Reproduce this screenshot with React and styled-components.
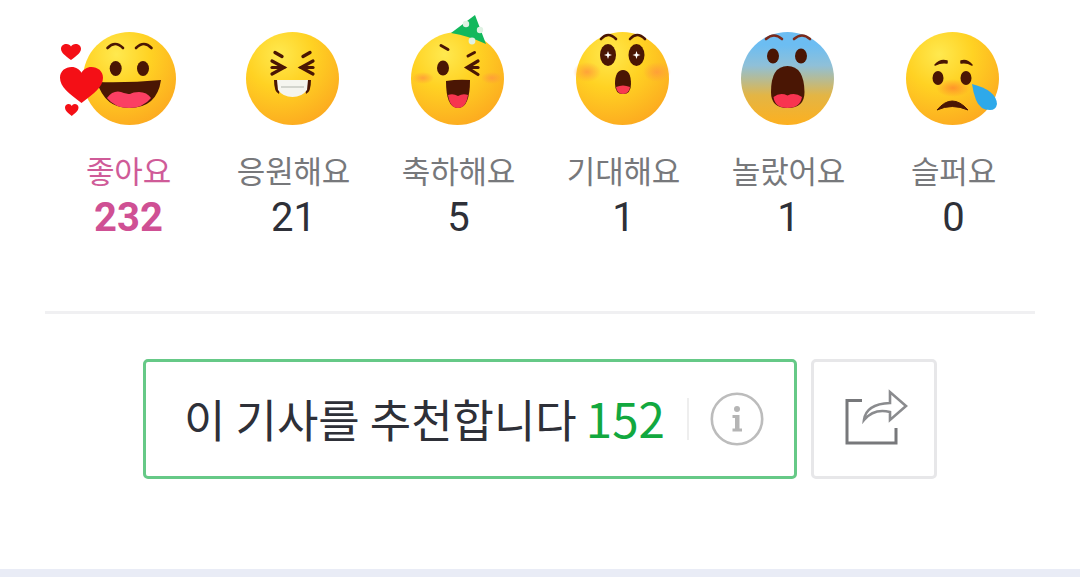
import React from 'react';
import styled, { createGlobalStyle } from 'styled-components';

const GlobalStyle = createGlobalStyle`
  html, body { margin: 0; padding: 0; background: #fff; }
  #root { height: 577px; overflow: hidden; }
`;

const Page = styled.div`
  height: 577px;
  display: flex;
  flex-direction: column;
  font-family: "Noto Sans CJK KR", "Noto Sans", sans-serif;
`;

const ReactionRow = styled.ul`
  list-style: none;
  margin: 0;
  padding: 32px 45px 0;
  display: grid;
  grid-template-columns: repeat(6, 165px);
`;

const Reaction = styled.li`
  display: flex;
  flex-direction: column;
  align-items: center;
`;

const FaceSvg = styled.svg`
  display: block;
  width: 93px;
  height: 93px;
  overflow: visible;
  margin-left: ${p => (p.$shift ? '4px' : '0')};
`;

const Label = styled.span`
  margin-top: 23px;
  padding-left: 2px;
  height: 44px;
  line-height: 44px;
  font-size: 31px;
  letter-spacing: -0.2px;
  color: ${p => (p.$active ? '#cf5b98' : '#77787b')};
`;

const Count = styled.strong`
  margin-top: 2px;
  padding-left: 2px;
  height: 48px;
  line-height: 48px;
  font-family: Roboto, sans-serif;
  font-size: 40px;
  font-weight: ${p => (p.$active ? 700 : 400)};
  color: ${p => (p.$active ? '#cf5094' : '#2e3038')};
`;

const Divider = styled.hr`
  margin: 69px 45px 0;
  border: 0;
  height: 3px;
  background: #f0f0f2;
`;

const ButtonRow = styled.div`
  margin-top: 45px;
  display: flex;
  justify-content: center;
  gap: 14px;
`;

const RecommendButton = styled.button`
  box-sizing: border-box;
  width: 654px;
  height: 120px;
  padding: 0 0 0 38px;
  display: flex;
  align-items: center;
  background: #fff;
  border: 3px solid #66c987;
  border-radius: 5px;
  font-family: inherit;
  font-size: 45px;
  color: #2e3038;
  white-space: nowrap;
`;

const RecommendText = styled.span`
  margin-bottom: 4px;
`;

const RecommendCount = styled.span`
  margin-left: 9px;
  font-size: 47.5px;
  color: #12a83f;
`;

const Separator = styled.span`
  flex-shrink: 0;
  width: 2px;
  height: 42px;
  margin: 0 21px 0 22px;
  background: #eeeeee;
`;

const ShareButton = styled.button`
  box-sizing: border-box;
  width: 126px;
  height: 120px;
  padding: 0 0 4px 6px;
  display: flex;
  align-items: center;
  justify-content: center;
  background: #fff;
  border: 3px solid #e7e7e9;
  border-radius: 5px;
`;

const BottomStrip = styled.div`
  margin-top: auto;
  height: 8px;
  background: #e9ecf6;
`;

const IconSvg = styled.svg`
  display: block;
  flex-shrink: 0;
`;

const BROWN = '#4a1604';

// yellow ball shared by the faces
const Ball = ({ id }) => (
  <>
    <defs>
      <radialGradient id={id} cx="0.36" cy="0.24" r="0.85">
        <stop offset="0" stopColor="#ffe94f" />
        <stop offset="0.42" stopColor="#ffd223" />
        <stop offset="1" stopColor="#fca61f" />
      </radialGradient>
    </defs>
    <circle cx="46.5" cy="46.5" r="46.5" fill={`url(#${id})`} />
  </>
);

const Blush = ({ id, spots, color = '#ff9a3c', rx = 11, ry = 6 }) => (
  <>
    <defs>
      <radialGradient id={id}>
        <stop offset="0" stopColor={color} stopOpacity="0.85" />
        <stop offset="1" stopColor={color} stopOpacity="0" />
      </radialGradient>
    </defs>
    {spots.map(([cx, cy]) => (
      <ellipse key={cx} cx={cx} cy={cy} rx={rx} ry={ry} fill={`url(#${id})`} />
    ))}
  </>
);

const Heart = ({ x, y, w, h }) => (
  <path
    transform={`translate(${x} ${y}) scale(${w / 24} ${h / 22})`}
    fill="#f40f16"
    d="M12 22C5 16 0 12 0 6.5 0 2.5 3 0 6.5 0 9 0 11 1.5 12 3.5 13 1.5 15 0 17.5 0 21 0 24 2.5 24 6.5 24 12 19 16 12 22Z"
  />
);

const Brow = ({ d, width = 2.6, color = BROWN }) => (
  <path d={d} fill="none" stroke={color} strokeWidth={width} strokeLinecap="round" />
);

const Likes = () => (
  <FaceSvg viewBox="0 0 93 93" $shift>
    <Ball id="ballLike" />
    <Brow d="M24.5 16Q32 8 40 16" />
    <Brow d="M53 16Q61 8 68.5 16" />
    <ellipse cx="32.7" cy="36.5" rx="6" ry="7.5" fill={BROWN} />
    <ellipse cx="60" cy="36.5" rx="6" ry="7.5" fill={BROWN} />
    <path d="M14 50Q46 51 78 48Q74 76 46 76Q22 76 14 50Z" fill={BROWN} />
    <path d="M24 66Q30 58 38 60Q44 62 47 62Q50 60 56 60Q64 60 68 66Q60 76 46 76Q32 76 24 66Z" fill="#fb3f63" />
    <Heart x={-23} y={35} w={43} h={36} />
    <Heart x={-22} y={12} w={20} h={16} />
    <Heart x={-18} y={72} w={13.5} h={12} />
  </FaceSvg>
);

const Cheer = () => (
  <FaceSvg viewBox="0 0 93 93">
    <Ball id="ballCheer" />
    <Brow d="M29 20.5L36 24.5" width="3.4" />
    <Brow d="M64 20.5L57 24.5" width="3.4" />
    <Brow d="M26 29L38 35.5L26 42" width="3.2" />
    <Brow d="M26 35.5H38" width="3.2" />
    <Brow d="M67 29L55 35.5L67 42" width="3.2" />
    <Brow d="M67 35.5H55" width="3.2" />
    <path d="M28 48Q28 60 33 62L35 48Z M65 48Q65 60 60 62L58 48Z" fill={BROWN} />
    <path d="M31 48H62L61 58Q56 65 46.5 65Q37 65 32 58Z" fill="#f5f5ef" />
    <path d="M35 55H58" stroke="#c5c8c0" strokeWidth="1.4" />
  </FaceSvg>
);

const Congrats = () => (
  <FaceSvg viewBox="0 0 93 93">
    <Ball id="ballParty" />
    <Blush id="blushParty" spots={[[12, 46], [81, 46]]} />
    <path d="M64 -17L40 1Q58 4 75 12Z" fill="#12b85c" />
    <circle cx="55" cy="-8" r="3.2" fill="#dff2e3" />
    <circle cx="69" cy="-2" r="3.2" fill="#dff2e3" />
    <circle cx="61" cy="9" r="3.4" fill="#dff2e3" />
    <Brow d="M30 13.5L37 17.5" width="3" />
    <Brow d="M57 24L63.5 20.5" width="3" />
    <ellipse cx="32" cy="36" rx="6" ry="7.5" fill={BROWN} />
    <Brow d="M67 29L56 35.5L67 42.5" width="3.2" />
    <Brow d="M58 35.5H67" width="3.2" />
    <path d="M35 49Q47 47 59 48Q59 76 47 76Q35 76 35 49Z" fill={BROWN} />
    <path d="M37 63Q42 61 47 64Q52 61 57 63Q55 76 47 76Q39 76 37 63Z" fill="#f7354f" />
  </FaceSvg>
);

const Sparkle = ({ x, y }) => (
  <path
    d={`M${x} ${y - 4}L${x + 1} ${y - 1}L${x + 4} ${y}L${x + 1} ${y + 1}L${x} ${y + 4}L${x - 1} ${y + 1}L${x - 4} ${y}L${x - 1} ${y - 1}Z`}
    fill="#fff"
  />
);

const Expect = () => (
  <FaceSvg viewBox="0 0 93 93">
    <Ball id="ballExpect" />
    <Blush id="blushExpect" spots={[[11, 40], [81, 40]]} rx={14} ry={10} />
    <Brow d="M25 7Q32 -1 40 7" />
    <Brow d="M54 7Q61 -1 69 7" />
    <ellipse cx="32" cy="23" rx="8" ry="11" fill={BROWN} />
    <ellipse cx="60.5" cy="23" rx="8" ry="11" fill={BROWN} />
    <Sparkle x={32} y={23} />
    <Sparkle x={60.5} y={23} />
    <path d="M47 38Q55 38 55 52Q55 62 47 62Q39 62 39 52Q39 38 47 38Z" fill={BROWN} />
    <path d="M40 55Q47 52 54 55Q53 62 47 62Q41 62 40 55Z" fill="#f8394f" />
  </FaceSvg>
);

const Surprised = () => (
  <FaceSvg viewBox="0 0 93 93">
    <defs>
      <linearGradient id="ballShock" x1="0" y1="0" x2="0" y2="1">
        <stop offset="0.14" stopColor="#6cbdf2" />
        <stop offset="0.36" stopColor="#8fc0d8" />
        <stop offset="0.68" stopColor="#e3b545" />
        <stop offset="1" stopColor="#fdb01f" />
      </linearGradient>
    </defs>
    <circle cx="46.5" cy="46.5" r="46.5" fill="url(#ballShock)" />
    <Brow d="M25 7Q33 0 41 7" color="#7a2a1c" />
    <Brow d="M53 7Q61 0 69 7" color="#7a2a1c" />
    <ellipse cx="32" cy="24" rx="6" ry="7.5" fill={BROWN} />
    <ellipse cx="60" cy="24" rx="6" ry="7.5" fill={BROWN} />
    <path d="M46.5 34Q63 34 63.5 60Q63.5 76 46.5 76Q30 76 30 60Q30 34 46.5 34Z" fill={BROWN} />
    <path d="M32.5 65Q39 60 46.5 63.5Q54 60 61 65Q59 76 46.5 76Q34 76 32.5 65Z" fill="#f93450" />
  </FaceSvg>
);

const Sad = () => (
  <FaceSvg viewBox="0 0 93 93">
    <Ball id="ballSad" />
    <Blush id="blushSad" spots={[[47, 56]]} rx={17} ry={9} color="#ff8a2c" />
    <path d="M29 33Q34 27 41 29L41 31Q35 30 29 33Z" fill={BROWN} stroke={BROWN} strokeWidth="1.5" strokeLinejoin="round" />
    <path d="M66 33Q61 27 55 29L55 31Q61 30 66 33Z" fill={BROWN} stroke={BROWN} strokeWidth="1.5" strokeLinejoin="round" />
    <ellipse cx="32" cy="46" rx="5.5" ry="7" fill={BROWN} />
    <ellipse cx="60" cy="46" rx="5.5" ry="7" fill={BROWN} />
    <path d="M31 78Q46 60 62 78Q46 71 31 78Z" fill={BROWN} stroke={BROWN} strokeWidth="1" strokeLinejoin="round" />
    <path d="M66 52Q90 58 91 72Q90 78 84 78Q74 78 70 68Q67 60 66 52Z" fill="#2ea9ea" />
  </FaceSvg>
);

const InfoIcon = () => (
  <IconSvg width="54" height="54" viewBox="0 0 54 54">
    <circle cx="27" cy="27" r="25.2" fill="none" stroke="#bcbcbc" strokeWidth="2.6" />
    <circle cx="27" cy="17" r="3" fill="#b5b5b5" />
    <path d="M22.5 23H29.5V36.5H32V39.5H22.5V36.5H25V26H22.5Z" fill="#b5b5b5" />
  </IconSvg>
);

const ShareIcon = () => (
  <IconSvg width="66" height="58" viewBox="0 0 66 58">
    <path d="M18 12.5H3V55H52V40" fill="none" stroke="#77787b" strokeWidth="3" />
    <path
      d="M20 32Q22 16 46 15V4L62 18L46 32V24Q30 20 20 32Z"
      fill="none"
      stroke="#8a8b8e"
      strokeWidth="2.6"
    />
  </IconSvg>
);

const reactions = [
  { name: '좋아요', count: 232, Face: Likes, active: true },
  { name: '응원해요', count: 21, Face: Cheer },
  { name: '축하해요', count: 5, Face: Congrats },
  { name: '기대해요', count: 1, Face: Expect },
  { name: '놀랐어요', count: 1, Face: Surprised },
  { name: '슬퍼요', count: 0, Face: Sad },
];

export default function App() {
  return (
    <Page>
      <GlobalStyle />
      <ReactionRow>
        {reactions.map(({ name, count, Face, active }) => (
          <Reaction key={name}>
            <Face />
            <Label $active={active}>{name}</Label>
            <Count $active={active}>{count}</Count>
          </Reaction>
        ))}
      </ReactionRow>
      <Divider />
      <ButtonRow>
        <RecommendButton>
          <RecommendText>
            이 기사를 추천합니다
            <RecommendCount>152</RecommendCount>
          </RecommendText>
          <Separator />
          <InfoIcon />
        </RecommendButton>
        <ShareButton>
          <ShareIcon />
        </ShareButton>
      </ButtonRow>
      <BottomStrip />
    </Page>
  );
}
